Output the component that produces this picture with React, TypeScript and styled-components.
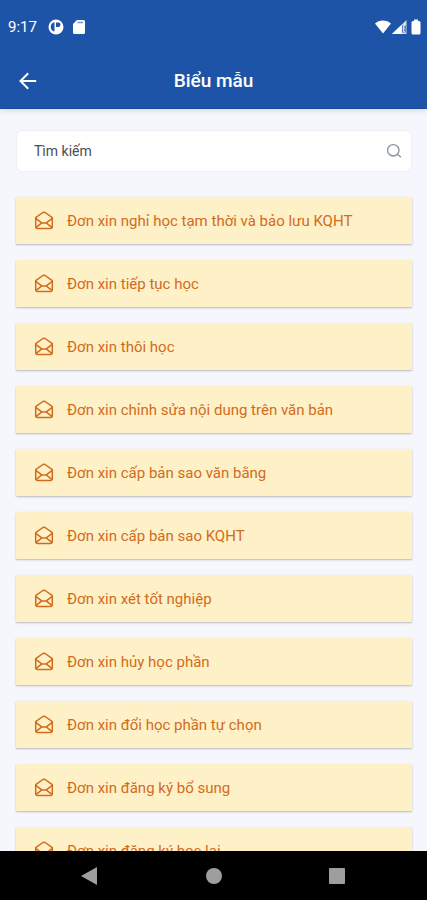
import React from "react";
import styled, { createGlobalStyle } from "styled-components";

const GlobalStyle = createGlobalStyle`
  *, *::before, *::after { box-sizing: border-box; }
  body { margin: 0; background: #f6f7fc; font-family: Roboto, "Noto Sans", sans-serif; }
  button, input { font: inherit; }
`;

const Screen = styled.div`
  display: flex;
  flex-direction: column;
  height: 100vh;
  overflow: hidden;
  background: #f6f7fc;
`;

const TopArea = styled.header`
  flex: none;
  background: #1e54a8;
  color: #fff;
  border-bottom: 1px solid #174a9c;
  box-shadow: 0 1px 6px rgba(30, 40, 70, 0.16);
`;

const StatusBar = styled.div`
  display: flex;
  align-items: center;
  justify-content: space-between;
  height: 53px;
  padding: 0 5px 0 8px;
`;

const StatusGroup = styled.div<{ $gap: number }>`
  display: flex;
  align-items: center;
  gap: ${({ $gap }) => $gap}px;
`;

const Clock = styled.time`
  margin-right: 3px;
  font-size: 15px;
  line-height: 20px;
`;

const TitleBar = styled.div`
  display: grid;
  grid-template-columns: 56px 1fr 56px;
  align-items: center;
  height: 55px;
`;

const BackButton = styled.button`
  display: flex;
  align-items: center;
  justify-content: center;
  height: 55px;
  padding: 0;
  border: 0;
  background: none;
  color: inherit;
`;

const Title = styled.h1`
  margin: 0;
  text-align: center;
  font-size: 19px;
  font-weight: 500;
  line-height: 24px;
`;

const Content = styled.main`
  flex: 1;
  min-height: 0;
  overflow: hidden;
  padding: 21px 15px 0 16px;
`;

const SearchBox = styled.label`
  display: flex;
  align-items: center;
  height: 42px;
  padding: 0 9px 0 17px;
  border: 1px solid #eeeff3;
  border-radius: 6px;
  background: #fff;
  color: #8b9299;
`;

const SearchInput = styled.input`
  flex: 1;
  min-width: 0;
  padding: 0;
  border: 0;
  outline: 0;
  background: none;
  color: #4a4d54;
  font-size: 14px;
  line-height: 20px;
  &::placeholder { color: #4a4d54; opacity: 1; }
`;

const FormList = styled.ul`
  display: flex;
  flex-direction: column;
  gap: 16px;
  margin: 25px 0 0;
  padding: 0;
  list-style: none;
`;

const FormButton = styled.button`
  display: flex;
  align-items: center;
  gap: 13px;
  width: 100%;
  height: 47px;
  padding: 0 18px;
  border: 0;
  border-radius: 1px;
  background: #fef1c7;
  box-shadow: 0 1px 2px rgba(40, 40, 60, 0.3);
  color: #d36b1c;
  font-size: 15px;
  line-height: 20px;
  text-align: left;
  white-space: nowrap;
`;

const NavBar = styled.nav`
  flex: none;
  display: flex;
  justify-content: center;
  align-items: center;
  height: 49px;
  background: #000;
`;

const NavButton = styled.button`
  display: flex;
  align-items: center;
  justify-content: center;
  width: 48px;
  height: 49px;
  padding: 0;
  border: 0;
  background: none;
  color: #9e9e9e;
`;

const NavGroup = styled.div`
  display: flex;
  justify-content: space-between;
  width: 69%;
`;

const MailIcon = () => (
  <svg width="20" height="20" viewBox="0 0 20 20" fill="none" stroke="currentColor" strokeWidth="1.5" strokeLinejoin="round" strokeLinecap="round" aria-hidden="true">
    <path d="M1.700 6.700 8.900 1.500a2 2 0 0 1 2.200 0l7.200 5.200v8.800a2 2 0 0 1-2 2H3.700a2 2 0 0 1-2-2Z" />
    <path d="m2 7.600 5.800 4.300h4.400L18 7.600M2.200 16.300l5.600-4.400M17.800 16.300l-5.600-4.400" />
  </svg>
);

const SearchIcon = () => (
  <svg width="16" height="16" viewBox="0 0 16 16" fill="none" stroke="currentColor" strokeWidth="1.300" strokeLinecap="round" aria-hidden="true">
    <circle cx="7.300" cy="7.300" r="5.700" />
    <path d="m11.500 11.500 3 2.300" />
  </svg>
);

const forms = [
  "Đơn xin nghỉ học tạm thời và bảo lưu KQHT",
  "Đơn xin tiếp tục học",
  "Đơn xin thôi học",
  "Đơn xin chỉnh sửa nội dung trên văn bản",
  "Đơn xin cấp bản sao văn bằng",
  "Đơn xin cấp bản sao KQHT",
  "Đơn xin xét tốt nghiệp",
  "Đơn xin hủy học phần",
  "Đơn xin đổi học phần tự chọn",
  "Đơn xin đăng ký bổ sung",
  "Đơn xin đăng ký học lại",
];

export default function App() {
  return (
    <>
      <GlobalStyle />
      <Screen>
        <TopArea>
          <StatusBar>
            <StatusGroup $gap={8}>
              <Clock>9:17</Clock>
              <svg width="16" height="16" viewBox="0 0 16 16" aria-hidden="true">
                <circle cx="8" cy="8" r="7.500" fill="#fff" />
                <path d="M6.500 3.300v9.200A4.700 4.700 0 0 1 6.500 3.300ZM8 3.500h2.200a2.300 2.300 0 0 1 0 4.600H8Z" fill="#1e54a8" />
              </svg>
              <svg width="14" height="16" viewBox="0 0 14 16" aria-hidden="true">
                <path d="M5 1h6.500A1.500 1.500 0 0 1 13 2.500v11a1.500 1.500 0 0 1-1.500 1.500h-9A1.500 1.500 0 0 1 1 13.500V5Z" fill="#fff" />
                <path d="M5.500 3.500h5.500" stroke="#1e54a8" strokeOpacity=".6" strokeWidth="1.500" />
              </svg>
            </StatusGroup>
            <StatusGroup $gap={1}>
              <svg width="16" height="14" viewBox="0 0 16 14" aria-hidden="true">
                <path d="M0 3.500C4.500-.500 11.500-.500 16 3.500L8 13.500Z" fill="#fff" />
              </svg>
              <svg width="15" height="14" viewBox="0 0 15 14" aria-hidden="true">
                <path d="M14.500 0v14H0Z" fill="#fff" fillOpacity=".8" />
                <path d="M10 5.500h4v7h-4Z" fill="#1e54a8" fillOpacity=".65" />
                <path d="M9.500 5v9H0Z" fill="#fff" />
                <path d="M13 6h-1.500v5.500H13M11.500 8.700H13" fill="none" stroke="#fff" strokeWidth=".7" />
              </svg>
              <svg width="14" height="16" viewBox="0 0 14 16" aria-hidden="true">
                <path d="M6 .5h4v1.500h1a1.500 1.500 0 0 1 1.500 1.500V14a1.500 1.500 0 0 1-1.500 1.500H5A1.500 1.500 0 0 1 3.500 14V3.500A1.500 1.500 0 0 1 5 2h1Z" fill="#fff" />
              </svg>
            </StatusGroup>
          </StatusBar>
          <TitleBar>
            <BackButton type="button" aria-label="Quay lại">
              <svg width="18" height="18" viewBox="0 0 18 18" fill="none" stroke="currentColor" strokeWidth="2" aria-hidden="true">
                <path d="M17.200 9H2M9.200 1.300 1.500 9l7.700 7.700" />
              </svg>
            </BackButton>
            <Title>Biểu mẫu</Title>
          </TitleBar>
        </TopArea>
        <Content>
          <SearchBox>
            <SearchInput type="text" placeholder="Tìm kiếm" aria-label="Tìm kiếm" />
            <SearchIcon />
          </SearchBox>
          <FormList>
            {forms.map((name) => (
              <li key={name}>
                <FormButton type="button">
                  <MailIcon />
                  {name}
                </FormButton>
              </li>
            ))}
          </FormList>
        </Content>
        <NavBar>
          <NavGroup>
            <NavButton type="button" aria-label="Trở lại">
              <svg width="18" height="18" viewBox="0 0 18 18" fill="currentColor" aria-hidden="true"><path d="M16 0v18L0 9Z" /></svg>
            </NavButton>
            <NavButton type="button" aria-label="Màn hình chính">
              <svg width="16" height="16" viewBox="0 0 16 16" fill="currentColor" aria-hidden="true"><circle cx="8" cy="8" r="8" /></svg>
            </NavButton>
            <NavButton type="button" aria-label="Ứng dụng gần đây">
              <svg width="16" height="16" viewBox="0 0 16 16" fill="currentColor" aria-hidden="true"><rect width="16" height="16" rx="1" /></svg>
            </NavButton>
          </NavGroup>
        </NavBar>
      </Screen>
    </>
  );
}
